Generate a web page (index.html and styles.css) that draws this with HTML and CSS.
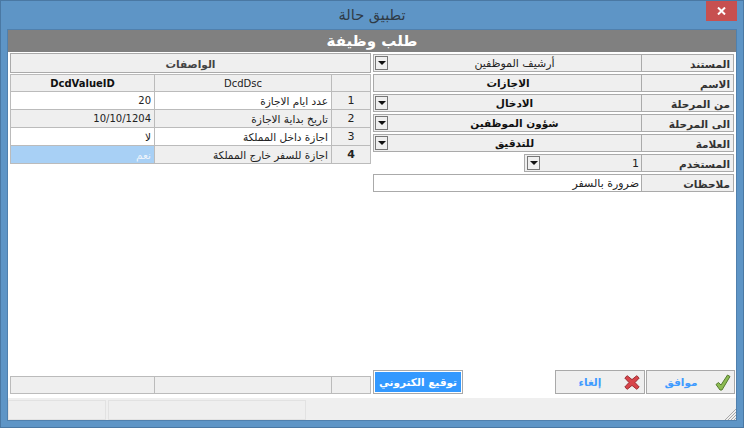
FILE: index.html
```html
<!DOCTYPE html>
<html lang="ar">
<head>
<meta charset="utf-8">
<title>تطبيق حالة</title>
<link rel="stylesheet" href="styles.css">
</head>
<body>
<div class="window">
  <header class="titlebar">
    <span class="title" dir="rtl">تطبيق حالة</span>
    <button class="close" aria-label="close"><svg width="9" height="8" viewBox="0 0 9 8"><path d="M1 0.5 8 7.5M8 0.5 1 7.5" stroke="#fff" stroke-width="2" fill="none"/></svg></button>
  </header>
  <div class="client">
    <h1 class="heading" dir="rtl">طلب وظيفة</h1>
    <main class="panes">
      <section class="left">
        <div class="caption" dir="rtl">الواصفات</div>
        <div class="grid">
          <div class="cell head value-col">DcdValueID</div>
          <div class="cell head name-col">DcdDsc</div>
          <div class="cell head"></div>

          <div class="cell white end">20</div>
          <div class="cell white end" dir="rtl">عدد ايام الاجازة</div>
          <div class="cell num">1</div>

          <div class="cell end">10/10/1204</div>
          <div class="cell end" dir="rtl">تاريخ بداية الاجازة</div>
          <div class="cell num">2</div>

          <div class="cell white end" dir="rtl">لا</div>
          <div class="cell white end" dir="rtl">اجازة داخل المملكة</div>
          <div class="cell num">3</div>

          <div class="cell selected end" dir="rtl">نعم</div>
          <div class="cell end" dir="rtl">اجازة للسفر خارج المملكة</div>
          <div class="cell num bold">4</div>
        </div>
        <div class="grid totals">
          <div class="cell"></div>
          <div class="cell"></div>
          <div class="cell"></div>
        </div>
      </section>
      <section class="right">
        <form class="form">
          <div class="row">
            <div class="field"><span class="drop"></span><span class="val" dir="rtl">أرشيف الموظفين</span></div>
            <label class="label" dir="rtl">المستند</label>
          </div>
          <div class="row">
            <div class="field"><span class="val strong" dir="rtl">الاجازات</span></div>
            <label class="label" dir="rtl">الاسم</label>
          </div>
          <div class="row">
            <div class="field"><span class="drop"></span><span class="val strong" dir="rtl">الادخال</span></div>
            <label class="label" dir="rtl">من المرحلة</label>
          </div>
          <div class="row">
            <div class="field"><span class="drop"></span><span class="val strong" dir="rtl">شؤون الموظفين</span></div>
            <label class="label" dir="rtl">الى المرحلة</label>
          </div>
          <div class="row">
            <div class="field"><span class="drop"></span><span class="val strong" dir="rtl">للتدقيق</span></div>
            <label class="label" dir="rtl">العلامة</label>
          </div>
          <div class="row">
            <div class="field short"><span class="drop"></span><span class="val endval">1</span></div>
            <label class="label" dir="rtl">المستخدم</label>
          </div>
          <div class="row">
            <div class="field white"><span class="val endval" dir="rtl">ضرورة بالسفر</span></div>
            <label class="label" dir="rtl">ملاحظات</label>
          </div>
        </form>
        <div class="actions">
          <button class="btn sign" type="button" dir="rtl">توقيع الكتروني</button>
          <div class="pair">
            <button class="btn cancel" type="button">
              <svg width="16" height="15" viewBox="0 0 16 15"><path d="M0.8 3 3.2 0.7 8 4.6 12.8 0.7 15.2 3 11 7.5 15.2 12 12.8 14.3 8 10.4 3.2 14.3 0.8 12 5 7.5Z" fill="#d8444a" stroke="#9a2f33" stroke-width="1" stroke-linejoin="round"/></svg>
              <span dir="rtl">إلغاء</span>
            </button>
            <button class="btn ok" type="button">
              <svg width="16" height="17" viewBox="0 0 16 17"><path d="M1 10.5 3.5 8.5 6 11 12.5 1 15 2.5 7 16 5 16Z" fill="#8cbb52" stroke="#557a30" stroke-width="1" stroke-linejoin="round"/></svg>
              <span dir="rtl">موافق</span>
            </button>
          </div>
        </div>
      </section>
    </main>
    <footer class="status">
      <div class="panel p1"></div>
      <div class="panel p2"></div>
    </footer>
    <svg class="grip" width="12" height="12" viewBox="0 0 12 12"><path d="M12 1 1 12M12 4 4 12M12 7 7 12M12 10 10 12" stroke="#a8a8a8" stroke-width="1" fill="none"/></svg>
  </div>
</div>
</body>
</html>
```
FILE: styles.css
```css
* { box-sizing: border-box; }
html, body { margin: 0; height: 100%; }
body {
  width: 744px;
  height: 428px;
  overflow: hidden;
  font-family: "DejaVu Sans", "Liberation Sans", sans-serif;
  font-size: 11px;
  color: #222;
}
.window {
  width: 744px;
  height: 428px;
  display: flex;
  flex-direction: column;
  background: #5e95c6;
  border: 1px solid #4a78a3;
}
.titlebar {
  height: 28px;
  flex: none;
  display: flex;
  justify-content: center;
  align-items: center;
  position: relative;
}
.title {
  font-size: 14.5px;
  color: #2f3b46;
  line-height: 29px;
}
.close {
  position: absolute;
  right: 6px;
  top: 0;
  width: 31px;
  height: 20px;
  background: #c75050;
  border: 0;
  padding: 0;
  display: flex;
  align-items: center;
  justify-content: center;
}
.client {
  flex: 1;
  margin: 0 6px 6px;
  display: flex;
  flex-direction: column;
  background: #fff;
  position: relative;
  min-height: 0;
  border: 1px solid #5080ad;
}
.heading {
  margin: 0;
  height: 22px;
  flex: none;
  background: #808080;
  color: #fff;
  font-size: 15px;
  font-weight: bold;
  line-height: 23px;
  text-align: center;
}
.panes {
  flex: 1;
  display: flex;
  gap: 2px;
  padding: 1px 2px 4px 2px;
  min-height: 0;
}
.left {
  width: 361px;
  flex: none;
  display: flex;
  flex-direction: column;
}
.caption {
  height: 20px;
  flex: none;
  background: #efefef;
  border: 1px solid #aaa;
  text-align: center;
  font-weight: bold;
  line-height: 20px;
  color: #444;
  font-size: 10.5px;
}
.grid {
  margin-top: 1px;
  display: grid;
  grid-template-columns: 144px 177px 39px;
  grid-template-rows: 17px;
  grid-auto-rows: 18px;
  border-top: 1px solid #bbb;
  border-left: 1px solid #bbb;
}
.totals {
  margin-top: auto;
  margin-bottom: 0;
  grid-template-rows: 17px;
}
.cell {
  border-right: 1px solid #bbb;
  border-bottom: 1px solid #bbb;
  background: #efefef;
  line-height: 19px;
  padding: 0 3px;
  white-space: nowrap;
  overflow: hidden;
  color: #222;
  font-size: 10.5px;
}
.head { text-align: center; line-height: 17px; font-size: 10px; }
.value-col { font-weight: bold; color: #111; }
.white { background: #fff; }
.end { text-align: right; }
.end:not([dir]) { font-size: 10px; line-height: 18px; }
.num { text-align: center; font-size: 11px; padding: 0; line-height: 18px; }
.bold { font-weight: bold; }
.selected { background: #a8d0f5; color: #eef4fb; }
.right {
  flex: 1;
  display: flex;
  flex-direction: column;
  min-width: 0;
}
.form {
  display: flex;
  flex-direction: column;
  gap: 2px;
  padding-top: 1px;
}
.row {
  height: 18px;
  display: flex;
  justify-content: flex-end;
}
.label {
  width: 92px;
  flex: none;
  background: #efefef;
  border: 1px solid #aaa;
  border-left-width: 0;
  text-align: right;
  padding: 0 3px;
  line-height: 19px;
  font-weight: bold;
  font-size: 10.5px;
  color: #333;
}
.field {
  flex: 1;
  display: flex;
  align-items: center;
  background: #efefef;
  border: 1px solid #aaa;
  min-width: 0;
  padding-left: 1px;
}
.field.short {
  flex: none;
  width: 118px;
  padding-left: 2px;
}
.field.white { background: #fff; }
.drop {
  width: 13px;
  height: 14px;
  flex: none;
  background: #efefef;
  border: 1px solid #777;
  position: relative;
}
.drop::after {
  content: "";
  position: absolute;
  left: 2px;
  top: 4px;
  border-left: 4px solid transparent;
  border-right: 4px solid transparent;
  border-top: 4px solid #111;
}
.val {
  flex: 1;
  text-align: center;
  line-height: 17px;
  padding-top: 1px;
  font-size: 11px;
  white-space: nowrap;
  color: #222;
}
.strong { font-weight: bold; color: #111; font-size: 10.5px; }
.endval { text-align: right; padding-right: 2px; }
.actions {
  margin-top: auto;
  margin-right: -1px;
  height: 24px;
  display: flex;
  justify-content: space-between;
}
.pair { display: flex; gap: 1px; }
.btn {
  height: 24px;
  background: #efefef;
  border: 1px solid #a9a9a9;
  display: flex;
  align-items: center;
  font-family: inherit;
  font-size: 10.5px;
  font-weight: bold;
  color: #3f9bff;
  flex-direction: row-reverse;
}
.btn span { flex: 1; text-align: center; }
.cancel { width: 90px; padding: 0 4px 0 0; }
.ok { width: 89px; padding: 0 3px 0 0; }
.sign {
  display: block;
  width: 90px;
  background: #3399ff;
  color: #fff;
  padding: 0;
  text-align: center;
  box-shadow: inset 0 0 0 1px #fff;
}
.status {
  height: 22px;
  flex: none;
  background: #efefef;
  display: flex;
  gap: 2px;
  padding-top: 2px;
}
.panel {
  border: 1px solid #e2e2e2;
  height: 20px;
}
.p1 { width: 98px; }
.p2 { width: 198px; }
.grip {
  position: absolute;
  right: 0;
  bottom: 0;
}
```
